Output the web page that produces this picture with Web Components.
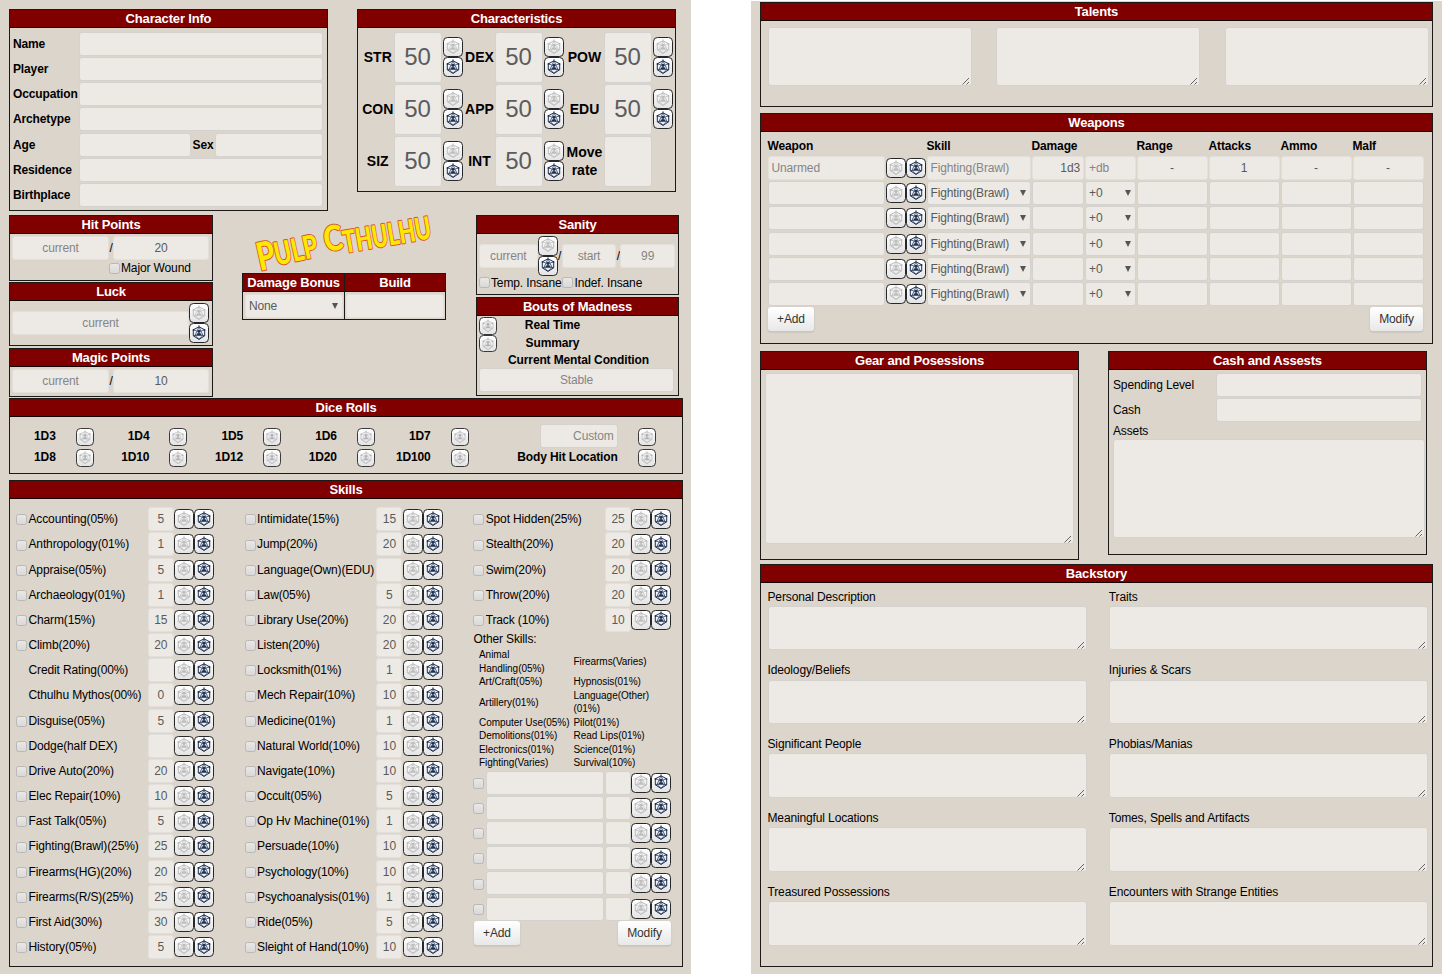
<!DOCTYPE html>
<html lang="en">
<head>
<meta charset="utf-8">
<title>Pulp Cthulhu Character Sheet</title>
<style>
html,body{margin:0;padding:0;background:#fff}
body{width:1450px;height:974px;overflow:hidden;font:12px/16px "Liberation Sans",Arial,sans-serif;letter-spacing:-.13px;color:#000}
</style>
</head>
<body>
<cs-app></cs-app>
<script>
const define=(name,css,html)=>{
  customElements.define(name,class extends HTMLElement{
    connectedCallback(){
      if(this.shadowRoot)return;
      const root=this.attachShadow({mode:'open'});
      const t=document.createElement('template');
      t.innerHTML=`<style>*{box-sizing:border-box}${css}</style>`+(typeof html==='function'?html(this):html);
      root.appendChild(t.content.cloneNode(true));
    }
  });
};
const at=(e,n,d='')=>e.getAttribute(n)??d;

/* Boxed section with a dark red title bar */
define('cs-panel',`
:host{display:flex;flex-direction:column;box-sizing:border-box;border:1px solid #1c1a18;flex:none}
h2{margin:0;height:18px;flex:none;background:#800000;border-bottom:1px solid #140000;color:#fff;font-weight:bold;font-size:13px;letter-spacing:-.17px;line-height:17px;text-align:center;white-space:nowrap}
.b{flex:1;min-height:0;position:relative}
`,e=>`<h2>${at(e,'heading')}</h2><div class="b"><slot></slot></div>`);

/* Single-line value; with "pick" it gets a drop-down arrow */
define('cs-field',`
:host{display:flex;box-sizing:border-box;height:24px;align-items:center;background:#edeae5;border:1px solid #d4d2ce;border-radius:3px;color:#5a5a5a;padding:0 3px;white-space:nowrap;min-width:0}
:host([c]){justify-content:center}
:host([r]){justify-content:flex-end}
:host([soft]){color:#858585}
:host([flat]){border-color:#e3e0db}
:host([pick]){justify-content:space-between}
:host([big]){font-size:24px;line-height:26px;letter-spacing:-.2px;color:#5c5c5c;height:51px}
i{width:0;height:0;border:3px solid transparent;border-top:6px solid #555;border-bottom:0;margin-right:1px}
`,e=>`<span>${at(e,'v')}</span>${e.hasAttribute('pick')?'<i></i>':''}`);

define('cs-area',`
:host{display:flex;box-sizing:border-box;background:#edeae5;border:1px solid #d4d2ce;border-radius:3px;align-items:flex-end;justify-content:flex-end}
svg{display:block;margin:0 1px 0 0}
`,`<svg width="9" height="9" viewBox="0 0 9 9" stroke="#555" stroke-width=".9"><path d="M1.500 8.500 8 2M5.500 8.500 8 6"/></svg>`);

/* Twenty-sided die button: faint or navy */
define('cs-die',`
:host{display:flex;box-sizing:border-box;width:20px;height:20px;flex:none;justify-content:center;align-items:flex-start;border:1.4px solid #26282a;border-radius:4.5px;background:linear-gradient(#fff,#e4e4e4);color:#bdbdbd;padding-top:.500px}
:host([navy]){color:#1d3156}
:host([small]){width:18px;height:18px;border-color:#3a3a3a;padding-top:1px;color:#b3b1b6}
svg{display:block;width:16px;height:16px}
:host([small]) svg{width:14px;height:14px}
`,e=>{const s=e.hasAttribute('small')?.75:1;return `<svg viewBox="0 0 16 16" fill="none" stroke="currentColor" stroke-width="${s}" stroke-linejoin="round"><path d="M8 1.800 13.700 4.800V10.800L8 14.400 2.300 10.800V4.800z"/><path d="M2.300 4.800 5.600 5.800M13.700 4.800 10.400 5.800M2.300 10.800 4 10.400M13.700 10.800 12 10.400M4 10.400 8 14.400 12 10.400zM8 .2v1.600M8 1.800 4 10.400M8 1.800l4 8.600" stroke-width="${s*.75}"/><circle cx="8" cy="6.300" r="1.600" fill="currentColor" stroke="none"/><path d="M5.200 10.200q.6-2.300 2.800-2.300t2.800 2.300z" fill="currentColor" stroke="none"/><circle cx="2.500" cy="4.900" r=".9" fill="currentColor" stroke="none"/><circle cx="13.500" cy="4.900" r=".9" fill="currentColor" stroke="none"/></svg>`});

define('cs-check',`
:host{display:block;box-sizing:border-box;width:11px;height:11px;flex:none;border:1px solid #b9b8b6;border-radius:2.500px;background:linear-gradient(#e9e8e7,#dad9d8)}
`,``);

define('cs-button',`
:host{display:flex;box-sizing:border-box;height:24px;align-items:center;justify-content:center;border-radius:3px;background:linear-gradient(#fff,#e8e8e8);box-shadow:0 0 0 .5px #d4d2d0,0 1px 2px rgba(0,0,0,.2);color:#333}
`,`<slot></slot>`);

define('cs-pair',`:host{display:flex;flex:none}:host([col]){flex-direction:column}`,`<cs-die></cs-die><cs-die navy></cs-die>`);

/* Curved, hand-lettered game title */
define('cs-logo',`
:host{display:block;width:204px;height:58px}
svg{display:block;overflow:visible}
text{font-family:Lato,"Open Sans",sans-serif;font-weight:900;letter-spacing:0}
.edge{fill:#d9532f;stroke:#d9532f;stroke-width:2.600px;stroke-linejoin:round}
.edge,.fill{paint-order:stroke}
text{fill:#ffe800;stroke:#d9532f;stroke-width:2px;paint-order:stroke;stroke-linejoin:round}
`,`<svg width="204" height="58" viewBox="0 0 204 58">
<text transform="translate(18,56) rotate(-12.500)"><tspan font-size="39" textLength="18" lengthAdjust="spacingAndGlyphs">P</tspan><tspan font-size="32" x="17.500" y="-1.500" textLength="44" lengthAdjust="spacingAndGlyphs">ULP</tspan></text>
<text transform="translate(84,38) rotate(-9.800)"><tspan font-size="35" y="-1" textLength="19" lengthAdjust="spacingAndGlyphs">C</tspan><tspan font-size="31" x="18.500" y="3.500" textLength="89" lengthAdjust="spacingAndGlyphs">THULHU</tspan></text></svg>`);

define('cs-info',`
:host{display:grid;grid-template-columns:65px 1fr;row-gap:1.180px;padding:3.900px 4px 0 3px;align-items:center;font-weight:bold}
.age{display:grid;grid-template-columns:113px 23px 1fr;align-items:center;text-align:center}
cs-field{margin-left:1px}.age cs-field+span{padding-left:1px}
`,`${['Name','Player','Occupation','Archetype'].map(l=>`<span>${l}</span><cs-field></cs-field>`).join('')}
<span>Age</span><div class="age"><cs-field></cs-field><span>Sex</span><cs-field></cs-field></div>
<span>Residence</span><cs-field></cs-field><span>Birthplace</span><cs-field></cs-field>`);

define('cs-stats',`
:host{display:grid;grid-template-columns:35.500px 48px 23px 30px 48px 23px 38px 48px 23px;row-gap:1.200px;padding-top:3.600px;align-items:center;font-weight:bold;font-size:14px;letter-spacing:0;line-height:18.800px;text-align:center}
cs-field{width:48px;font-weight:normal}cs-pair{margin-left:1px}
span:nth-of-type(3n+1){padding-left:4px}
`,`${[['STR','DEX','POW'],['CON','APP','EDU'],['SIZ','INT','']].map(r=>r.map(s=>s?`<span>${s}</span><cs-field big c v="50"></cs-field><cs-pair col></cs-pair>`:`<div>Move<br>rate</div><cs-field big></cs-field><div></div>`).join('')).join('')}`);

define('cs-skill',`
:host{display:grid;grid-template-columns:12.200px 1fr 26px 40.500px;height:25.180px;align-items:center;white-space:nowrap}
cs-check{margin-top:1.500px}
.n{margin-right:.500px}
cs-field.v{padding:0;width:26px}
cs-pair{margin-left:.300px}
`,e=>`${e.hasAttribute('nocheck')?'<span></span>':'<cs-check></cs-check>'}${e.hasAttribute('blank')?'<cs-field class="n"></cs-field>':`<span>${at(e,'name')}</span>`}<cs-field class="v" ${e.hasAttribute('blank')?'':'flat'} c v="${at(e,'v')}"></cs-field><cs-pair></cs-pair>`);

define('cs-skills',`
:host{display:grid;grid-template-columns:198px 198px 198px;column-gap:30.600px;padding:7.600px 0 0 6.300px}
.o{margin:0;height:16px;line-height:15px}
.t{display:grid;grid-template-columns:94.500px 1fr;padding-left:5.500px;font-size:10px;letter-spacing:-.04px;line-height:13.500px;align-items:center;white-space:nowrap;height:121.500px;margin-bottom:.200px}
.f{display:flex;justify-content:space-between;padding:0 .500px}
.f cs-button:first-child{width:46px}.f cs-button:last-child{width:53px}
`,()=>{
const sk=l=>l.map(([n,v,x])=>`<cs-skill name="${n}" v="${v}" ${x||''}></cs-skill>`).join('');
return `<div>${sk([['Accounting(05%)',5],['Anthropology(01%)',1],['Appraise(05%)',5],['Archaeology(01%)',1],['Charm(15%)',15],['Climb(20%)',20],['Credit Rating(00%)','','nocheck'],['Cthulhu Mythos(00%)',0,'nocheck'],['Disguise(05%)',5],['Dodge(half DEX)',''],['Drive Auto(20%)',20],['Elec Repair(10%)',10],['Fast Talk(05%)',5],['Fighting(Brawl)(25%)',25],['Firearms(HG)(20%)',20],['Firearms(R/S)(25%)',25],['First Aid(30%)',30],['History(05%)',5]])}</div>
<div>${sk([['Intimidate(15%)',15],['Jump(20%)',20],['Language(Own)(EDU)',''],['Law(05%)',5],['Library Use(20%)',20],['Listen(20%)',20],['Locksmith(01%)',1],['Mech Repair(10%)',10],['Medicine(01%)',1],['Natural World(10%)',10],['Navigate(10%)',10],['Occult(05%)',5],['Op Hv Machine(01%)',1],['Persuade(10%)',10],['Psychology(10%)',10],['Psychoanalysis(01%)',1],['Ride(05%)',5],['Sleight of Hand(10%)',10]])}</div>
<div>${sk([['Spot Hidden(25%)',25],['Stealth(20%)',20],['Swim(20%)',20],['Throw(20%)',20],['Track (10%)',10]])}
<p class="o">Other Skills:</p>
<div class="t"><span>Animal<br>Handling(05%)</span><span>Firearms(Varies)</span><span>Art/Craft(05%)</span><span>Hypnosis(01%)</span><span>Artillery(01%)</span><span>Language(Other)<br>(01%)</span><span>Computer Use(05%)</span><span>Pilot(01%)</span><span>Demolitions(01%)</span><span>Read Lips(01%)</span><span>Electronics(01%)</span><span>Science(01%)</span><span>Fighting(Varies)</span><span>Survival(10%)</span></div>
${'<cs-skill blank></cs-skill>'.repeat(6)}
<div class="f"><cs-button>+Add</cs-button><cs-button>Modify</cs-button></div></div>`});

define('cs-dice',`
:host{display:grid;grid-template-columns:repeat(5,45.700px 48.050px) 139px 1fr;grid-template-rows:21.500px 21.500px;padding-top:7.800px;align-items:center;font-weight:bold;text-align:right;white-space:nowrap}
cs-die{margin:2px 0 0 20px}
cs-field{width:78px;justify-self:end;font-weight:normal}
`,()=>[['1D3','1D4','1D5','1D6','1D7','*'],['1D8','1D10','1D12','1D20','1D100','Body Hit Location']].map(r=>r.map(s=>(s==='*'?'<cs-field r soft v="Custom"></cs-field>':`<span>${s}</span>`)+'<cs-die small></cs-die>').join('')).join(''));

define('cs-weapons',`
:host{display:block;padding:5px 8px 0 6.500px}
.g{display:grid;grid-template-columns:118.500px 40.500px 105px 53.500px 51.500px 72px 72px 72px 72px;height:25.180px;align-items:center}
.h{height:18.500px;font-weight:bold}
cs-field{margin-right:1px}
.f{display:flex;justify-content:space-between;padding:.500px 1px 0 .500px}
.f cs-button:first-child{width:46px}.f cs-button:last-child{width:53px}
`,`<div class="g h"><span>Weapon</span><span></span><span>Skill</span><span>Damage</span><span></span><span>Range</span><span>Attacks</span><span>Ammo</span><span>Malf</span></div>
<div class="g"><cs-field soft flat v="Unarmed"></cs-field><cs-pair></cs-pair><cs-field soft flat v="Fighting(Brawl)"></cs-field><cs-field flat r v="1d3"></cs-field><cs-field soft flat v="+db"></cs-field><cs-field flat c v="-"></cs-field><cs-field flat c v="1"></cs-field><cs-field flat c v="-"></cs-field><cs-field flat c v="-"></cs-field></div>
${'<div class="g"><cs-field></cs-field><cs-pair></cs-pair><cs-field pick v="Fighting(Brawl)"></cs-field><cs-field></cs-field><cs-field pick v="+0"></cs-field><cs-field></cs-field><cs-field></cs-field><cs-field></cs-field><cs-field></cs-field></div>'.repeat(5)}
<div class="f"><cs-button>+Add</cs-button><cs-button>Modify</cs-button></div>`);

define('cs-backstory',`
:host{display:grid;grid-template-columns:319.500px 319.500px;column-gap:21.800px;padding:5.700px 0 0 6.500px}
div{height:73.800px}p{margin:0;line-height:16px;padding:0 0 1.200px}cs-area{height:44.500px}
`,()=>['Personal Description','Traits','Ideology/Beliefs','Injuries &amp; Scars','Significant People','Phobias/Manias','Meaningful Locations','Tomes, Spells and Artifacts','Treasured Possessions','Encounters with Strange Entities'].map(l=>`<div><p>${l}</p><cs-area></cs-area></div>`).join(''));

define('cs-app',`
:host{display:flex;gap:60px;height:974px}
.s{width:691px;background:#dcd5cb;height:974px;overflow:hidden}
.l{padding:9px 8px 0 9px}
.r{padding:1px 9px 0;margin-top:1px}
.row{display:flex;align-items:flex-start}
.vit{height:183px;margin-top:4px}
.vit>div{flex:none}
.c1{width:204px}.c1 cs-panel,.c3 cs-panel{width:100%}
.c2{width:205px;margin-left:29px}.c3{width:203px;margin-left:29px}
.ln{display:flex;align-items:center}
.mid{display:flex}
.hp{padding:2px 2px 0}
.hp i,.sn i{font-style:normal;text-align:center;width:5px;flex:none}
.mw{display:flex;align-items:center;padding-left:97px}
.mw span,.ci span{padding-left:1px}
.lk{padding:2px 3px 0 2px}
.sn{padding:1.500px 3px 0 2px}
.ci{display:flex;align-items:center;padding:0 0 0 2px;margin-top:-1px;white-space:nowrap}
.bm{display:grid;grid-template-columns:20px 1fr;padding:1px 4px 0 2px;font-weight:bold;text-align:center;line-height:16px}
.bm cs-die{height:17.500px}
.bm span{padding-right:68px}.bm .w{grid-column:1/3;padding:0 0 0 4px}
.bm cs-field{grid-column:1/3;font-weight:normal}
.tal{display:grid;grid-template-columns:repeat(3,204.300px);gap:24.300px;padding:6px 0 0 6.500px}
.cash{display:grid;grid-template-columns:103px 1fr;row-gap:1.200px;align-items:center;padding:3px 4px 0 4px}
`,`
<div class="s l">
 <div class="row" style="gap:29px"><cs-panel heading="Character Info" style="width:319px;height:202px"><cs-info></cs-info></cs-panel>
 <cs-panel heading="Characteristics" style="width:319px;height:183px"><cs-stats></cs-stats></cs-panel></div>
 <div class="row vit">
  <div class="c1">
   <cs-panel heading="Hit Points" style="height:66px"><div class="hp"><div class="ln"><cs-field soft flat c v="current" style="width:97px"></cs-field><i style="width:4px">/</i><cs-field flat c v="20" style="width:96px"></cs-field></div><div class="mw"><cs-check></cs-check><span>Major Wound</span></div></div></cs-panel>
   <cs-panel heading="Luck" style="height:64px;margin-top:1px"><div class="lk ln"><cs-field soft flat c v="current" style="width:177px"></cs-field><cs-pair col></cs-pair></div></cs-panel>
   <cs-panel heading="Magic Points" style="height:49px;margin-top:2px"><div class="hp"><div class="ln"><cs-field soft flat c v="current" style="width:97px"></cs-field><i style="width:4px">/</i><cs-field flat c v="10" style="width:96px"></cs-field></div></div></cs-panel>
  </div>
  <div class="c2"><cs-logo></cs-logo><div class="mid">
   <cs-panel heading="Damage Bonus" style="width:103px;height:47px"><cs-field flat pick v="None" style="margin:2px 1px 0 2px"></cs-field></cs-panel>
   <cs-panel heading="Build" style="width:102px;height:47px;margin-left:-1px"><cs-field flat style="margin:2px 1px 0"></cs-field></cs-panel></div></div>
  <div class="c3">
   <cs-panel heading="Sanity" style="height:80px"><div class="sn ln"><cs-field soft flat c v="current" style="width:59px"></cs-field><cs-pair col></cs-pair><i style="width:4px">/</i><cs-field soft flat c v="start" style="width:55px"></cs-field><i style="width:4px">/</i><cs-field soft flat c v="99" style="width:55px"></cs-field></div><div class="ci"><cs-check></cs-check><span>Temp. Insane</span><cs-check style="margin-left:1px"></cs-check><span>Indef. Insane</span></div></cs-panel>
   <cs-panel heading="Bouts of Madness" style="height:99px;margin-top:2px"><div class="bm"><cs-die small></cs-die><span>Real Time</span><cs-die small></cs-die><span>Summary</span><span class="w">Current Mental Condition</span><cs-field soft c v="Stable"></cs-field></div></cs-panel>
  </div>
 </div>
 <cs-panel heading="Dice Rolls" style="width:674px;height:76px"><cs-dice></cs-dice></cs-panel>
 <cs-panel heading="Skills" style="width:674px;height:487px;margin-top:6px"><cs-skills></cs-skills></cs-panel>
</div>
<div class="s r">
 <cs-panel heading="Talents" style="height:104.500px"><div class="tal"><cs-area style="height:59px"></cs-area><cs-area></cs-area><cs-area></cs-area></div></cs-panel>
 <cs-panel heading="Weapons" style="height:230.500px;margin-top:6.500px"><cs-weapons></cs-weapons></cs-panel>
 <div class="row" style="gap:29px;margin-top:7.500px;height:213px">
  <cs-panel heading="Gear and Posessions" style="width:319px;height:209px"><cs-area style="height:171px;margin:3px 4px 0"></cs-area></cs-panel>
  <cs-panel heading="Cash and Assests" style="width:319px;height:204px"><div class="cash"><span>Spending Level</span><cs-field></cs-field><span>Cash</span><cs-field></cs-field><span>Assets</span></div><cs-area style="height:99px;margin:0 1px 0 4px"></cs-area></cs-panel>
 </div>
 <cs-panel heading="Backstory" style="height:402.500px"><cs-backstory></cs-backstory></cs-panel>
</div>`);
</script>
</body>
</html>
